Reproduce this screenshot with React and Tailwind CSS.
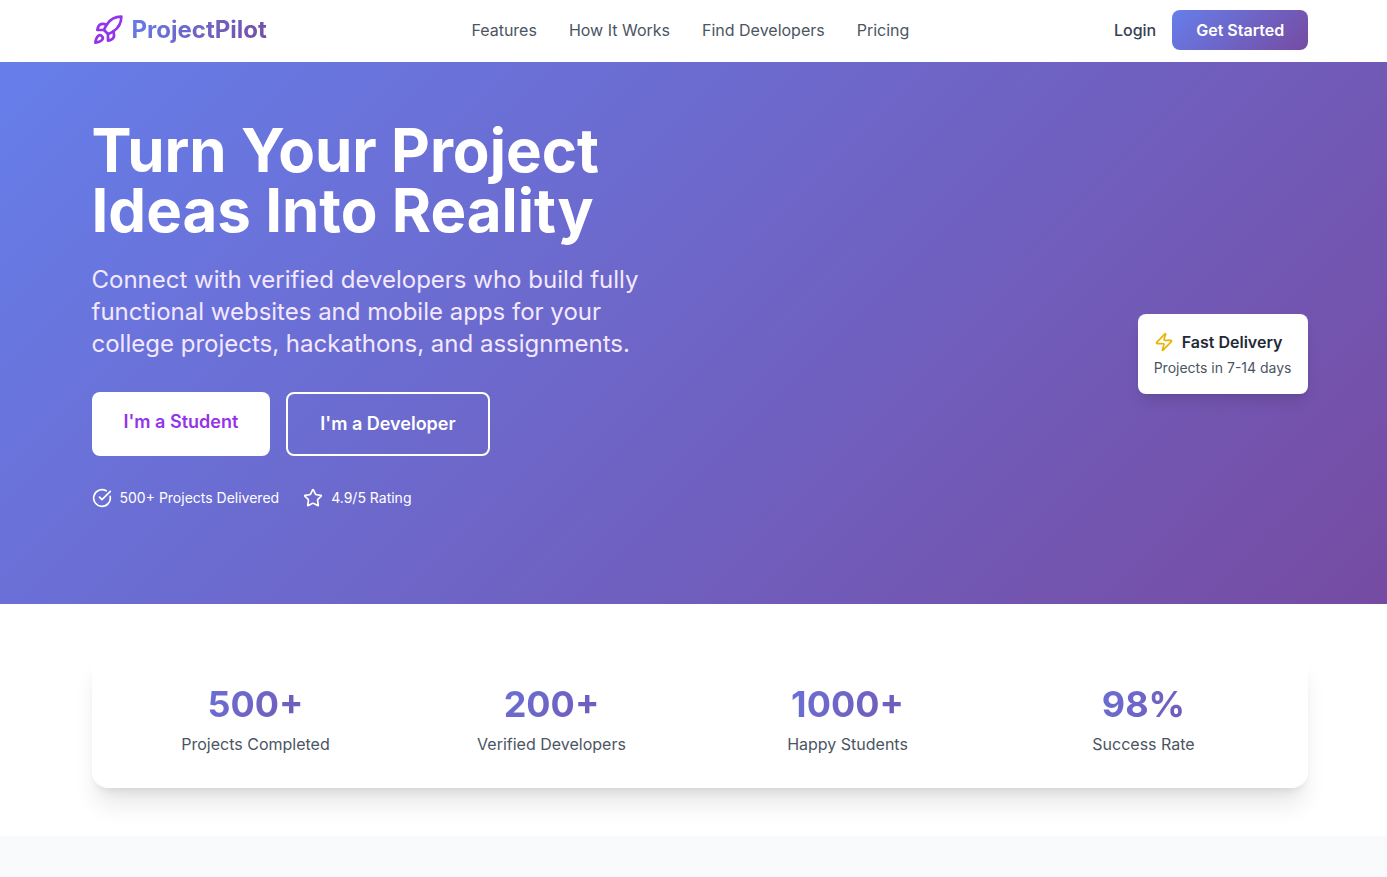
import React from "react";
import { Rocket, CircleCheckBig, Star, Zap } from "lucide-react";

const navLinks = ["Features", "How It Works", "Find Developers", "Pricing"];

const stats = [
  { value: "500+", label: "Projects Completed" },
  { value: "200+", label: "Verified Developers" },
  { value: "1000+", label: "Happy Students" },
  { value: "98%", label: "Success Rate" },
];

const Navbar = () => (
  <nav className="bg-white pb-[2px]">
    <div className="mx-auto flex h-[60px] w-[1280px] items-center justify-between pl-8 pr-[31.25px]">
      <div className="flex items-center gap-2">
        <Rocket className="h-8 w-8 text-[#9333ea]" />
        <span className="bg-[linear-gradient(135deg,#667eea_0%,#764ba2_100%)] bg-clip-text text-2xl font-bold text-transparent">
          ProjectPilot
        </span>
      </div>
      <div className="flex items-center gap-8 text-[#4b5563]">
        {navLinks.map((link) => (
          <a key={link} href="#">
            {link}
          </a>
        ))}
      </div>
      <div className="flex items-center gap-4">
        <button className="font-medium text-[#374151]">Login</button>
        <button className="rounded-lg bg-[linear-gradient(135deg,#667eea_0%,#764ba2_100%)] px-6 py-2 font-semibold text-white">
          Get Started
        </button>
      </div>
    </div>
  </nav>
);

const Hero = () => (
  <section className="bg-[linear-gradient(135deg,#667eea_0%,#764ba2_100%)] text-white">
    <div className="relative mx-auto w-[1280px] px-8 pb-24 pt-[58px]">
      <h1 className="text-6xl font-bold">
        Turn Your Project
        <br />
        Ideas Into Reality
      </h1>
      <p className="mt-6 w-[576px] text-2xl text-[#f3e8ff]">
        Connect with verified developers who build fully functional websites and
        mobile apps for your college projects, hackathons, and assignments.
      </p>
      <div className="mt-8 flex gap-4">
        <a
          href="#"
          className="rounded-lg bg-white px-8 py-4 text-lg font-semibold text-[#9333ea]"
        >
          I'm a Student
        </a>
        <a
          href="#"
          className="rounded-lg border-2 border-white px-8 py-4 text-lg font-semibold text-white"
        >
          I'm a Developer
        </a>
      </div>
      <div className="mt-8 flex items-center gap-6 text-sm">
        <div className="flex items-center gap-2">
          <CircleCheckBig className="h-5 w-5" />
          <span>500+ Projects Delivered</span>
        </div>
        <div className="flex items-center gap-2">
          <Star className="h-5 w-5" />
          <span>4.9/5 Rating</span>
        </div>
      </div>

      {/* floating card */}
      <div className="absolute right-8 top-[252px] rounded-lg bg-white p-4 text-[#1f2937] shadow-lg">
        <div className="flex items-center gap-2">
          <Zap className="h-5 w-5 text-[#eab308]" />
          <span className="font-semibold">Fast Delivery</span>
        </div>
        <p className="mt-1 text-sm text-[#4b5563]">Projects in 7-14 days</p>
      </div>
    </div>
  </section>
);

const Stats = () => (
  <section className="bg-white py-12">
    <div className="mx-auto w-[1280px] px-8">
      <div className="grid grid-cols-4 gap-8 rounded-2xl bg-white p-8 shadow-xl">
        {stats.map((stat) => (
          <div key={stat.label} className="text-center">
            <div className="bg-[linear-gradient(135deg,#667eea_0%,#764ba2_100%)] bg-clip-text text-4xl font-bold text-transparent">
              {stat.value}
            </div>
            <div className="mt-2 text-[#4b5563]">{stat.label}</div>
          </div>
        ))}
      </div>
    </div>
  </section>
);

const App = () => {
  return (
    <div className="h-screen overflow-clip bg-white font-['Inter',sans-serif]">
      <div className="w-[1399px]">
        <Navbar />
        <Hero />
        <Stats />
        <div className="h-[100px] bg-[#f9fafb]"></div>
      </div>
    </div>
  );
};

export default App;
